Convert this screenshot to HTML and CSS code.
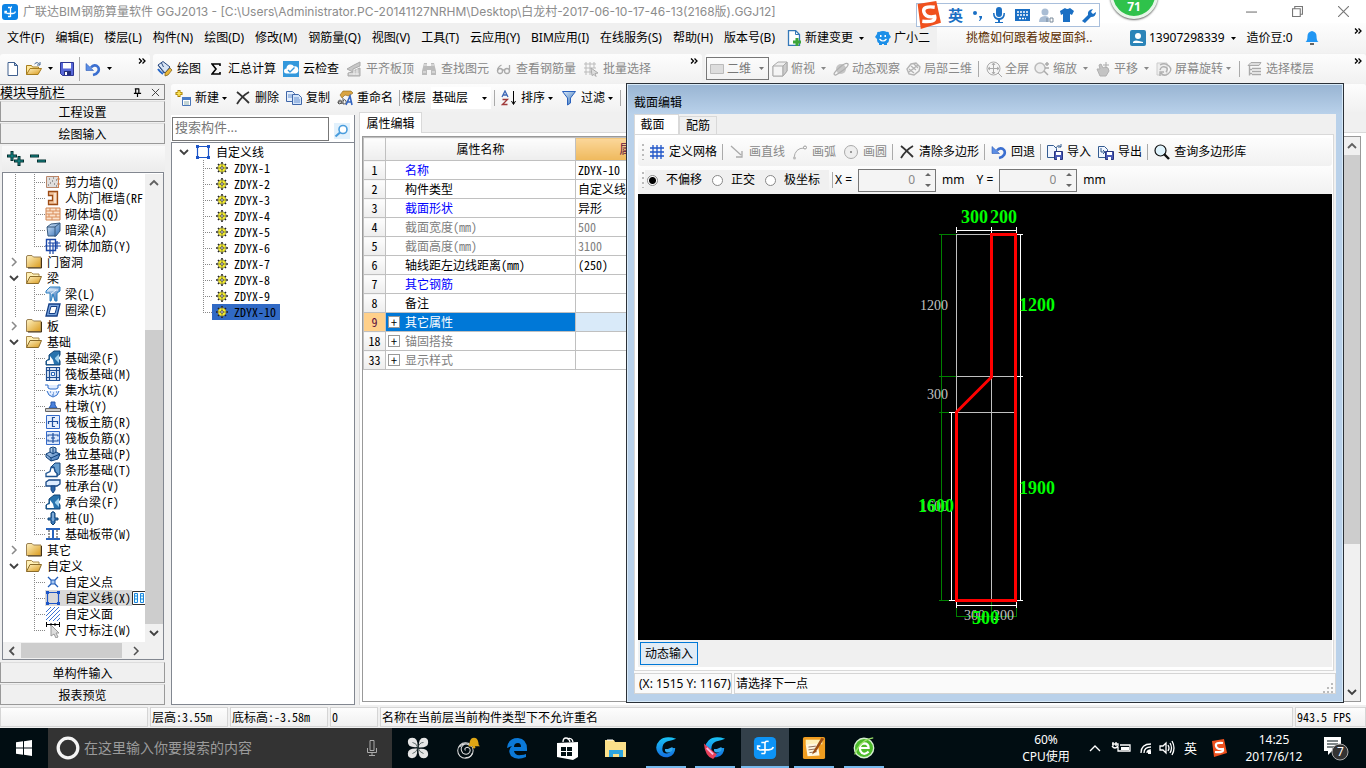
FILE: index.html
```html
<!DOCTYPE html>
<html lang="zh-CN">
<head>
<meta charset="utf-8">
<title>广联达BIM钢筋算量软件 GGJ2013</title>
<link rel="stylesheet" href="styles.css">
</head>
<body>
<svg class="defs" aria-hidden="true">
  <defs>
    <linearGradient id="gold" x1="0" y1="0" x2="1" y2="1"><stop offset="0" stop-color="#fff3c4"/><stop offset="1" stop-color="#d99a1c"/></linearGradient>
    <linearGradient id="steel" x1="0" y1="0" x2="1" y2="1"><stop offset="0" stop-color="#dcebfa"/><stop offset="1" stop-color="#2f6cb5"/></linearGradient>
    <linearGradient id="aqua" x1="0" y1="0" x2="0" y2="1"><stop offset="0" stop-color="#19c3f5"/><stop offset="1" stop-color="#1470e0"/></linearGradient>
  </defs>
  <symbol id="app" viewBox="0 0 16 16"><rect width="16" height="16" rx="3" fill="#0d84e6"/><path d="M8.500 13V4.500q0-1.500 1.500-1.500M6 3.500h2M3 7.500q1 2 3 2h5q2 0 2.500-2M3 9.500v-2h2M6 12.500h2.500" fill="none" stroke="#fff" stroke-width="1.300"/></symbol>
  <symbol id="arr" viewBox="0 0 5 3"><path d="M0 0h5L2.500 3z" fill="currentColor"/></symbol>
  <symbol id="more" viewBox="0 0 8 6"><path d="M1 .5 3.500 3 1 5.500M4.500.5 7 3 4.500 5.500" fill="none" stroke="#000" stroke-width="1.300"/></symbol>
  <symbol id="new" viewBox="0 0 16 16"><path d="M3 1.500h6.500l3 3v10H3z" fill="#fff" stroke="#40608f"/><path d="M9.500 1.500v3h3z" fill="#b8cdea" stroke="#40608f"/></symbol>
  <symbol id="open" viewBox="0 0 16 16"><path d="M.5 13.500V4.500h5l1 1.500h6v2" fill="#ffe79b" stroke="#a67c1d"/><path d="M.5 13.500 4 7.500h11.500l-3.500 6z" fill="url(#gold)" stroke="#a67c1d"/><path d="M8.500 3q3-3 5 .5M14 1v3h-3" fill="none" stroke="#456690"/></symbol>
  <symbol id="save" viewBox="0 0 16 16"><path d="M1.500 1.500h13v13h-11l-2-2z" fill="#5868d8" stroke="#2c3593"/><path d="M4 2h8v5.500H4z" fill="#fff"/><path d="M5 10h7v4H5z" fill="#24307c"/><path d="M6 11h2v3H6z" fill="#fff"/></symbol>
  <symbol id="undo" viewBox="0 0 16 16"><path d="M8 14c5-1 7-5 5-8-2-2.500-5-2-7 .5" fill="none" stroke="#3b6fd0" stroke-width="2.600"/><path d="M1 2.500v7h7.500z" fill="#5b8ee6" stroke="#2d5ab5" stroke-width=".6"/></symbol>
  <symbol id="paint" viewBox="0 0 16 16"><path d="m1 4 5-3.500L13 6l-5 6z" fill="#d8e4f4" stroke="#2a4a80"/><path d="M1 4 7 12M4.500 2l2 4" stroke="#2a4a80"/><path d="m8 12 5-5 2 2-4 5-3 1z" fill="#e8b63a" stroke="#7a5a12" stroke-width=".7"/><path d="M1 8q2 3 5 5" stroke="#2667c9" stroke-width="2" fill="none"/></symbol>
  <symbol id="cloud" viewBox="0 0 16 16"><rect width="16" height="16" fill="#3398dc"/><path d="M3.500 12.500a2.500 2.500 0 0 1 0-5 4 4 0 0 1 7.500-2 3.500 3.500 0 0 1 1.500 7z" fill="#fff"/><path d="m5 9 2 2 4.500-4.500" fill="none" stroke="#3398dc" stroke-width="1.400"/></symbol>
  <symbol id="slab" viewBox="0 0 16 16"><path d="m1 8 7-4 6-3v4L7 8v2l7-3v8H2v-3l5-1z" fill="#c8c8c8" stroke="#aaa"/><path d="M8 9v5M11 8v6M3 13h10" stroke="#eee"/></symbol>
  <symbol id="bino" viewBox="0 0 16 16"><path d="M3 2h3v3h4V2h3l2 8v4h-5V9H6v5H1v-4z" fill="#bbb"/><path d="M3 4h3M10 4h3M2 11h3M11 11h3" stroke="#eee"/></symbol>
  <symbol id="glasses" viewBox="0 0 16 16"><g fill="none" stroke="#aaa" stroke-width="1.300"><circle cx="4" cy="10" r="2.500"/><circle cx="11" cy="10" r="2.500"/><path d="M6 9h3M1.500 10q0-4 4-6M13.500 11V4"/></g></symbol>
  <symbol id="batch" viewBox="0 0 16 16"><path d="M1 3h12M1 7h12M1 11h7M3 1v13M7 1v13M11 1v6" fill="none" stroke="#bbb"/><path d="m8 7 7 5-3 .5 1 3-2-2-2 1z" fill="#ddd" stroke="#aaa"/></symbol>
  <symbol id="cube" viewBox="0 0 16 16"><path d="m1 5 5-4h9v9l-4 5H1z" fill="#eee" stroke="#aaa"/><path d="M1 5h10v10H1z" fill="#f4f4f4" stroke="#aaa"/><path d="m11 5 4-4v9l-4 5z" fill="#ccc" stroke="#aaa"/></symbol>
  <symbol id="orbit" viewBox="0 0 16 16"><circle cx="8" cy="8" r="5" fill="#c6c6c6"/><path d="M2 14Q-1 13 6 7t9-4q1 2-6 7t-7 4z" fill="none" stroke="#b0b0b0" stroke-width="1.300"/></symbol>
  <symbol id="part" viewBox="0 0 16 16"><g fill="none" stroke="#b4b4b4" stroke-width="1.400"><path d="m2 8 4-5 5-1 4 4-1 4-5 4-5-1zM4 8l5 4M6 5l5 4M9 3l4 4M4 11 13 4"/></g></symbol>
  <symbol id="full" viewBox="0 0 16 16"><circle cx="7.500" cy="7.500" r="6.500" fill="#f5f5f5" stroke="#aaa"/><path d="M7.500 2v11M2 7.500h11M6 4l1.500-2L9 4M6 11l1.500 2L9 11M4 6 2 7.500 4 9M11 6l2 1.500L11 9M12 12l4 4" fill="none" stroke="#aaa"/></symbol>
  <symbol id="zoom" viewBox="0 0 16 16"><circle cx="6" cy="7" r="5" fill="#eee" stroke="#bbb" stroke-width="1.500"/><path d="m10 10 4 4M11 3h4M13 1v4M11 7h4" stroke="#aaa" stroke-width="1.500"/></symbol>
  <symbol id="hand" viewBox="0 0 16 16"><path d="M2 8h3l-1-4 2-1 2 4 2-1 3 1 1 3-3 5H5z" fill="#c4c4c4" stroke="#b0b0b0"/><path d="M11 1v6M8 4h6" stroke="#aaa"/></symbol>
  <symbol id="rot" viewBox="0 0 16 16"><path d="M1 2h10v12H1z" fill="#eee" stroke="#ccc"/><path d="M4 4q5-3 9 1t-1 8q-4 3-7-1M4 9q1-4 5-3t1 5M4 15v-4h4" fill="none" stroke="#b0b0b0" stroke-width="1.400"/></symbol>
  <symbol id="floors" viewBox="0 0 16 16"><path d="M4 1.500h10l-2 3H1z" fill="#ddd" stroke="#aaa"/><path d="M5 7.500h9M5 10.500h9M5 13.500h9M2.500 5v9.500M3 8.500h2M3 12.500h2" fill="none" stroke="#aaa" stroke-width="1.400"/></symbol>
  <symbol id="newc" viewBox="0 0 16 16"><path d="M4 0v7M0.500 3.500h7" stroke="#a98000" stroke-width="3"/><path d="M4 1v5M1.500 3.500h5" stroke="#ffe75c" stroke-width="1.500"/><path d="M7.500 7.500h8v8h-8z" fill="#fff" stroke="#4a76b8"/><path d="M7 7h9v3H7z" fill="#4a7cc8"/><path d="M9 12h5M9 14h5" stroke="#8aa" /></symbol>
  <symbol id="x" viewBox="0 0 16 16"><path d="M2 2q5 4 12 11M14 2Q7 6 2 14" fill="none" stroke="#333" stroke-width="1.800"/></symbol>
  <symbol id="copy" viewBox="0 0 16 16"><path d="M.5 1.500h6l2 2v8h-8z" fill="#e5effc" stroke="#3f66a8"/><path d="M6.500 4.500h6l3 3v7h-9z" fill="#d3e4fa" stroke="#3f66a8"/><path d="M2 5h4M2 7h4M8 8h5M8 10h6M8 12h6" stroke="#6b92cf"/></symbol>
  <symbol id="ren" viewBox="0 0 16 16"><path d="m3 5 3-4h8l2 2-4 3-4-1-3 3z" fill="#d9a441" stroke="#8b6517" stroke-width=".6"/><path d="M1 13q0-3 2-3t2 3v1M5 12q-4-1-4 1t4 0M6 8v6q4 0 3-3t-3 0" fill="none" stroke="#555"/><path d="m9 15 4-9 2 9M10 12h5" fill="none" stroke="#3465c0" stroke-width="1.600"/></symbol>
  <symbol id="sort" viewBox="0 0 16 16"><path d="m1 7 3-6 3 6M2 5h4" fill="none" stroke="#3c66b4" stroke-width="1.300"/><path d="M1.500 9.500h5l-5 5h5" fill="none" stroke="#a03a3a" stroke-width="1.300"/><path d="M12.500 1v13M10.500 11l2 3.500 2-3.500" fill="none" stroke="#000"/></symbol>
  <symbol id="funnel" viewBox="0 0 16 16"><path d="M1.500 1.500h13l-5 6.500v5l-3 2V8z" fill="url(#steel)" stroke="#2b62bd"/></symbol>
  <symbol id="lens" viewBox="0 0 16 16"><path d="M0 0h16v16H0z" fill="#e2f1fc"/><circle cx="9" cy="6.500" r="4" fill="#fff" stroke="#4a9ddd" stroke-width="1.600"/><path d="m6 9.500-4.500 4" stroke="#4a9ddd" stroke-width="2.200"/></symbol>
  <symbol id="fold" viewBox="0 0 16 14"><path d="M.5 12.500V2q0-1.500 1.500-1.500h4L7.500 2H15v10.500z" fill="url(#gold)" stroke="#9a8052"/><path d="M15.500 3v10H2" fill="none" stroke="#443214"/></symbol>
  <symbol id="foldo" viewBox="0 0 16 14"><path d="M.5 12.500V1.500h5L7 3h6v3" fill="#fff0b5" stroke="#a98a4d"/><path d="M.5 12.500 4 5.500h11.500l-3 7z" fill="url(#gold)" stroke="#8a6b2a"/></symbol>
  <symbol id="down" viewBox="0 0 10 10"><path d="m1 3 4 4 4-4" fill="none" stroke="#404040" stroke-width="1.800"/></symbol>
  <symbol id="up" viewBox="0 0 10 10"><path d="m1 7 4-4 4 4" fill="none" stroke="#606060" stroke-width="1.800"/></symbol>
  <symbol id="right" viewBox="0 0 10 10"><path d="m3 1 4 4-4 4" fill="none" stroke="currentColor" stroke-width="1.500"/></symbol>
  <symbol id="left" viewBox="0 0 10 10"><path d="M7 1 3 5l4 4" fill="none" stroke="#505050" stroke-width="1.800"/></symbol>
  <symbol id="sq" viewBox="0 0 16 16"><path d="M2.500 2.500h11v11h-11z" fill="none" stroke="#1c55c8" stroke-width="1.200"/><path d="M1 1h3v3H1zM12 1h3v3h-3zM1 12h3v3H1zM12 12h3v3h-3z" fill="#1c55c8"/></symbol>
  <symbol id="gear" viewBox="0 0 12 12"><path d="M6 0v12M0 6h12M2 2l8 8M10 2l-8 8" stroke="#222" stroke-width="1.600"/><circle cx="6" cy="6" r="4.200" fill="#f6ee28" stroke="#555" stroke-width=".6"/><path d="M6 2v8M2 6h8" stroke="#555" stroke-width=".6"/><circle cx="6" cy="6" r="1.300" fill="#fff" stroke="#333" stroke-width=".8"/></symbol>
  <symbol id="w1" viewBox="0 0 16 16"><path d="M1.500 2.500h12v11h-12z" fill="#e0dedd" stroke="#b8866a"/><path d="M4 5h1M8 4h1M11 6h1M5 9h1M9 10h1M7 7h1M3 11h1M11 12h1" stroke="#555"/><path d="M13.500 2v12M12 5h3M12 10h3" stroke="#d08050"/></symbol>
  <symbol id="w2" viewBox="0 0 16 16"><path d="M3.500 1.500h9v13h-9v-4h4v-5h-4z" fill="#f1c39b" stroke="#9c4a14" stroke-width="1.300"/><path d="M10 3v10" stroke="#fff"/></symbol>
  <symbol id="w3" viewBox="0 0 16 16"><path d="M1 2h14v12H1z" fill="#fbe3cd" stroke="#cf8350"/><path d="M1 5h14M1 8h14M1 11h14M5 2v3M11 2v3M8 5v3M4 8v3M11 8v3M7 11v3" stroke="#d98c58"/></symbol>
  <symbol id="w4" viewBox="0 0 16 16"><path d="m2 5 4-3 9-1v8l-4 5H3z" fill="url(#steel)" stroke="#37597f"/><path d="M2 5h8v10M10 5l5-4" fill="none" stroke="#37597f"/></symbol>
  <symbol id="w5" viewBox="0 0 16 16"><path d="M1.500 1.500h9v11h-9z" fill="#fff" stroke="#1b47a8" stroke-width="1.400"/><path d="M0 8h16M3 5h12M5 2v14M8 5v11M12 3v8" fill="none" stroke="#1b47a8" stroke-width="1.200"/></symbol>
  <symbol id="b1" viewBox="0 0 16 16"><path d="m1 5 4-4h10v4l-3 2v8h-2l-2-7-2 7H5V7H1z" fill="url(#steel)" stroke="#2a7fc0"/><path d="M3 4h10M6 8l5-4" stroke="#e9f6ff"/></symbol>
  <symbol id="b2" viewBox="0 0 16 16"><path d="M4 2h11l-3 12H1z" fill="#7aa5dd" stroke="#143f86" stroke-width="1.300"/><path d="M6 4.500h6l-2 7H4z" fill="#fff" stroke="#143f86"/></symbol>
  <symbol id="f1" viewBox="0 0 16 16"><path d="M1 15v-4l3-2V5l5-4h6v4l-2 3 2 3v4z" fill="#2873ad" stroke="#0f4375"/><path d="M2 14v-3l3-1V6l3 4 1 4z" fill="#fff"/><path d="m5 6 5-4M10 8l4-4v9l-4-4z" fill="#9cd0ee"/></symbol>
  <symbol id="f2" viewBox="0 0 16 16"><path d="M1.500 1.500h13v13h-13zM1 4.500h14M1 11.500h14M4.500 1v14M11.500 1v14" fill="#dfeaf8" stroke="#1f4f94" stroke-width="1.200"/><path d="M6.500 6.500h3v3h-3z" fill="#fff" stroke="#2765b6"/></symbol>
  <symbol id="f3" viewBox="0 0 16 16"><path d="M0 3h3v3l2 1h6l2-1V3h3M2 9q1 5 6 6 5-1 6-6" fill="#e1edff" stroke="#2f6dc9"/><path d="M5 10h1M8 11h1M11 10h1M7 13h2" stroke="#2f6dc9"/></symbol>
  <symbol id="f4" viewBox="0 0 16 16"><path d="m4 10 2-3V4h4v3l2 3z" fill="#4a82dd" stroke="#2859aa"/><path d="M.5 10.500h15v3H.5z" fill="#ccc" stroke="#666"/></symbol>
  <symbol id="f5" viewBox="0 0 16 16"><path d="M1.500 1.500h13v13h-13z" fill="#e5effe" stroke="#356ac9"/><path d="M10 3.500H7.500v9H10M3.500 10V7.500h9V10" fill="none" stroke="#1e4f9e" stroke-width="1.200"/></symbol>
  <symbol id="f6" viewBox="0 0 16 16"><path d="M1.500 1.500h13v13h-13z" fill="#dce9fc" stroke="#356ac9"/><path d="M8 3v10M3 6.500V5h10v1.500M3 9.500V11h10V9.500M6 8h4" fill="none" stroke="#1e4f9e" stroke-width="1.200"/></symbol>
  <symbol id="f7" viewBox="0 0 16 16"><path d="m1 8 4-2V2l3-1 3 1v4l4 2-2 5-7 2-5-4z" fill="url(#steel)" stroke="#0d3e78"/><path d="m1 8 5 4 9-4M6 12v3M5 6l3 2V2M8 8l3-2" fill="none" stroke="#0d3e78"/></symbol>
  <symbol id="f8" viewBox="0 0 16 16"><path d="m6 5 4-4h5v11l-3 2v-3l-2-2-1-4z" fill="#679fd0" stroke="#164579"/><path d="M1 14.500v-3l4-2 1-4h3l1 4 2 2v3z" fill="#fff" stroke="#1e538f" stroke-width="1.300"/></symbol>
  <symbol id="f9" viewBox="0 0 16 16"><path d="m1 4 3-2h11v4l-3 2H1z" fill="#dcecff" stroke="#184886" stroke-width="1.300"/><path d="M6 8h4v4l-2 3-2-3z" fill="#2a65a9" stroke="#184886"/></symbol>
  <symbol id="f10" viewBox="0 0 16 16"><path d="M6 3q2-3 4 0v5h3v2h-3v3l-2 2-2-2v-3H3V8h3z" fill="#3b77b6" stroke="#0f4375"/><path d="M8 3v8" stroke="#c3ddf4"/></symbol>
  <symbol id="f11" viewBox="0 0 16 16"><path d="M1 3h14M1 13h14M8 3v10" stroke="#2863bd" stroke-width="2"/><path d="M4 4v8M12 4v8" stroke="#333" stroke-dasharray="2 1"/></symbol>
  <symbol id="c1" viewBox="0 0 16 16"><path d="m3 3 3 3M13 3l-3 3M3 13l3-3M13 13l-3-3" stroke="#1e5bb8" stroke-width="1.300"/><path d="M6 6h4v4H6z" fill="#a8c8f2" stroke="#1e5bb8"/></symbol>
  <symbol id="c3" viewBox="0 0 16 16"><path d="m1 6 5-5M1 10l9-9M1 14 14 1M4 15 15 4M8 15l7-7M12 15l3-3" stroke="#3c74d4"/></symbol>
  <symbol id="c4" viewBox="0 0 16 16"><path d="M1.500 0v5M14.500 0v5M1 2.500h14M6 1v3M10 1v3" stroke="#000"/><path d="M6 3v11l3-2 2 4 2-1-2-4h3z" fill="#ddd" stroke="#999"/></symbol>
  <symbol id="grid" viewBox="0 0 16 16"><path d="M1 4h14M1 8h14M1 12h14M4 1v14M8 1v14M12 1v14" stroke="#1f55c8" stroke-width="1.300"/></symbol>
  <symbol id="dl" viewBox="0 0 16 16"><path d="m2 2 10 9M13 7v6H7" fill="none" stroke="#aaa" stroke-width="1.300"/></symbol>
  <symbol id="arc" viewBox="0 0 16 16"><path d="M2 14Q3 4 12 4" fill="none" stroke="#aaa"/><circle cx="13" cy="3.500" r="1.500" fill="#fff" stroke="#999"/><circle cx="2.500" cy="14" r="1.500" fill="#bbb"/></symbol>
  <symbol id="circ" viewBox="0 0 16 16"><circle cx="8" cy="8" r="6.500" fill="#eee" stroke="#aaa"/><path d="M7 8h2" stroke="#999" stroke-width="2"/></symbol>
  <symbol id="imp" viewBox="0 0 16 16"><path d="M.5 1.500h6l3 3v9h-9z" fill="#f1f6ff" stroke="#345c91"/><path d="M7.500 7.500h8v8h-8z" fill="#4858b5" stroke="#283580"/><path d="M9 8h5v3H9zM10 13h3v3h-3z" fill="#fff"/><path d="M9 4q2-4 5-1M14 0v3h-3" fill="none" stroke="#345c91"/></symbol>
  <symbol id="exp" viewBox="0 0 16 16"><path d="M.5 2.500h6l3 3v8h-9z" fill="#f1f6ff" stroke="#345c91"/><path d="M7.500 7.500h8v8h-8z" fill="#4858b5" stroke="#283580"/><path d="M9 8h5v3H9zM10 13h3v3h-3z" fill="#fff"/><path d="M3 4v4h4M5 6l2 2-2 2" fill="none" stroke="#345c91"/></symbol>
  <symbol id="query" viewBox="0 0 16 16"><circle cx="6.500" cy="6.500" r="5.500" fill="#dff3fc" stroke="#111" stroke-width="1.200"/><path d="m10 10 5 5" stroke="#111" stroke-width="2.400"/></symbol>
  <symbol id="dragon" viewBox="0 0 26 26"><path d="M24 3Q12-1 6 5 0 11 4 18q4 6 11 5 8-2 8-10l-5 0q1 5-4 6-5 0-5-5 0-6 5-8 6-1 10-3z" fill="url(#aqua)"/><path d="M12 14q-1 4 4 4 5-1 4-6l-5 2" fill="#35a9ee"/></symbol>
  <symbol id="sogou" viewBox="0 0 16 18"><path d="m1 2 12-2 3 14-13 4z" fill="#f0511e"/><path d="M12 4Q4 3 5 7t7 3q1 4-8 3" fill="none" stroke="#fff" stroke-width="2.200"/></symbol>
</svg>

<header class="titlebar">
  <svg class="i16"><use href="#app"/></svg>
  <h1>广联达BIM钢筋算量软件 GGJ2013 - [C:\Users\Administrator.PC-20141127NRHM\Desktop\白龙村-2017-06-10-17-46-13(2168版).GGJ12]</h1>
  <div class="winbtns">
    <button aria-label="最小化"><svg viewBox="0 0 10 10"><path d="M0 5.500h10" stroke="#777"/></svg></button>
    <button aria-label="还原"><svg viewBox="0 0 10 10"><path d="M.5 2.500h7v7h-7zM2.500 2.500v-2h7v7h-2" fill="none" stroke="#777"/></svg></button>
    <button aria-label="关闭"><svg viewBox="0 0 10 10"><path d="m0 0 10 10M10 0 0 10" stroke="#777"/></svg></button>
  </div>
</header>

<nav class="menubar">
  <div class="menus">
    <button>文件(F)</button><button>编辑(E)</button><button>楼层(L)</button><button>构件(N)</button><button>绘图(D)</button><button>修改(M)</button><button>钢筋量(Q)</button><button>视图(V)</button><button>工具(T)</button><button>云应用(Y)</button><button>BIM应用(I)</button><button>在线服务(S)</button><button>帮助(H)</button><button>版本号(B)</button>
    <button class="ic"><svg class="i16" viewBox="0 0 16 16"><path d="M2.500.5h7l4 4v11h-11z" fill="#fff" stroke="#3478b8" stroke-width="1.300"/><path d="M9.500.5v4h4" fill="none" stroke="#3478b8"/><path d="M11 8v8M7 12h8" stroke="#3da53a" stroke-width="3"/></svg>新建变更<svg class="arr"><use href="#arr"/></svg></button>
    <button class="ic"><svg class="i16" viewBox="0 0 16 16"><path d="M2 4q0-3 2-2 4-2 8 0 2-1 2 2l2 3-2 2q0 4-2 4v2H9v-1H7v1H4v-2q-2 0-2-4L0 7z" fill="#1c8fe8"/><path d="M5 6h1.500M9.500 6H11" stroke="#fff" stroke-width="2"/><path d="M4.500 9q3.500 4 7 0" fill="none" stroke="#fff" stroke-width="1.200"/></svg>广小二</button>
  </div>
  <a class="tip" href="#">挑檐如何跟着坡屋面斜..</a>
  <div class="account">
    <button class="ic"><svg class="i16" viewBox="0 0 16 16"><rect width="16" height="16" rx="2" fill="#2b84b8"/><circle cx="8" cy="6" r="3" fill="#fff"/><path d="M3 12q1-3 10 0v1H3z" fill="#fff"/></svg>13907298339<svg class="arr"><use href="#arr"/></svg></button>
    <button>造价豆:0</button>
    <button aria-label="通知"><svg class="i16" viewBox="0 0 16 16"><path d="M1.500 12q2-1 2-6 0-4 4.500-5 4.500 1 4.500 5 0 5 2 6z" fill="#2196f3"/><path d="M6 14h4" stroke="#333" stroke-width="1.500"/></svg></button>
    <button class="last" aria-label="更多"><svg class="more"><use href="#more"/></svg></button>
  </div>
</nav>

<div class="toolbars">
  <div class="bar t1">
    <button aria-label="新建"><svg class="i16"><use href="#new"/></svg></button>
    <button aria-label="打开"><svg class="i16"><use href="#open"/></svg><svg class="arr"><use href="#arr"/></svg></button>
    <button aria-label="保存"><svg class="i16"><use href="#save"/></svg></button>
    <i class="sep"></i>
    <button aria-label="撤销"><svg class="i16"><use href="#undo"/></svg><svg class="arr"><use href="#arr"/></svg></button>
    <button class="last" aria-label="更多"><svg class="more"><use href="#more"/></svg></button>
  </div>
  <div class="bar t2">
    <button><svg class="i16"><use href="#paint"/></svg>绘图</button>
    <button><svg class="sigma" viewBox="0 0 10 12"><path d="M9 3V1H1l4 5-4 5h8V9" fill="none" stroke="#000" stroke-width="1.600"/></svg>汇总计算</button>
    <button><svg class="i16"><use href="#cloud"/></svg>云检查</button>
    <button disabled><svg class="i16"><use href="#slab"/></svg>平齐板顶</button>
    <button disabled><svg class="i16"><use href="#bino"/></svg>查找图元</button>
    <button disabled><svg class="i16"><use href="#glasses"/></svg>查看钢筋量</button>
    <button disabled><svg class="i16"><use href="#batch"/></svg>批量选择</button>
    <button class="last" aria-label="更多"><svg class="more"><use href="#more"/></svg></button>
  </div>
  <div class="bar t3">
    <label class="dim"><svg viewBox="0 0 14 10"><path d="M.5.500h13v9H.5z" fill="#ddd" stroke="#bbb"/></svg><select aria-label="视图维度" disabled><option>二维</option></select><svg class="arr"><use href="#arr"/></svg></label>
    <button disabled><svg class="i16"><use href="#cube"/></svg>俯视<svg class="arr"><use href="#arr"/></svg></button>
    <button disabled><svg class="i16"><use href="#orbit"/></svg>动态观察</button>
    <button disabled><svg class="i16"><use href="#part"/></svg>局部三维</button>
    <i class="sep"></i>
    <button disabled><svg class="i16"><use href="#full"/></svg>全屏</button>
    <button disabled><svg class="i16"><use href="#zoom"/></svg>缩放<svg class="arr"><use href="#arr"/></svg></button>
    <button disabled><svg class="i16"><use href="#hand"/></svg>平移<svg class="arr"><use href="#arr"/></svg></button>
    <button disabled class="tight"><svg class="i16"><use href="#rot"/></svg>屏幕旋转<svg class="arr"><use href="#arr"/></svg></button>
    <i class="sep"></i>
    <button disabled><svg class="i16"><use href="#floors"/></svg>选择楼层</button>
    <button class="last" aria-label="更多"><svg class="more"><use href="#more"/></svg></button>
  </div>
</div>

<main class="work">
  <aside class="dock song">
    <h2>模块导航栏<svg class="pin" viewBox="0 0 10 10"><path d="M2 1h5M3 1v5M6.500 1v5M1 6h8M5 6v4" fill="none" stroke="#000" stroke-width="1.300"/></svg><svg class="pin" viewBox="0 0 10 10"><path d="m1 1 8 8M9 1 1 9" stroke="#333"/></svg></h2>
    <button class="section">工程设置</button>
    <button class="section">绘图输入</button>
    <div class="strip"><svg viewBox="0 0 44 16"><g fill="none" stroke="#052f2f" stroke-width="3"><path d="M5 0v10M0 5h10M12 5v10M7 10h10M23 5h9M30 10h9"/></g><path d="M5 1v8M1 5h8M12 6v8M8 10h8M24 5h7M31 10h7" stroke="#159595"/></svg></div>
    <div class="treebox">
      <div class="treerow">
        <ul class="tree">
          <li class="kid"><i class="g1"></i><i class="g2"></i><svg class="i16"><use href="#w1"/></svg>剪力墙(Q)</li>
          <li class="kid"><i class="g1"></i><i class="g2"></i><svg class="i16"><use href="#w2"/></svg>人防门框墙(RF</li>
          <li class="kid"><i class="g1"></i><i class="g2"></i><svg class="i16"><use href="#w3"/></svg>砌体墙(Q)</li>
          <li class="kid"><i class="g1"></i><i class="g2"></i><svg class="i16"><use href="#w4"/></svg>暗梁(A)</li>
          <li class="kid"><i class="g1"></i><i class="g2 end"></i><svg class="i16"><use href="#w5"/></svg>砌体加筋(Y)</li>
          <li class="dir"><svg class="ex"><use href="#right"/></svg><svg class="fold"><use href="#fold"/></svg>门窗洞</li>
          <li class="dir"><svg class="ex"><use href="#down"/></svg><svg class="fold"><use href="#foldo"/></svg>梁</li>
          <li class="kid"><i class="g1"></i><i class="g2"></i><svg class="i16"><use href="#b1"/></svg>梁(L)</li>
          <li class="kid"><i class="g1"></i><i class="g2 end"></i><svg class="i16"><use href="#b2"/></svg>圈梁(E)</li>
          <li class="dir"><svg class="ex"><use href="#right"/></svg><svg class="fold"><use href="#fold"/></svg>板</li>
          <li class="dir"><svg class="ex"><use href="#down"/></svg><svg class="fold"><use href="#foldo"/></svg>基础</li>
          <li class="kid"><i class="g1"></i><i class="g2"></i><svg class="i16"><use href="#f1"/></svg>基础梁(F)</li>
          <li class="kid"><i class="g1"></i><i class="g2"></i><svg class="i16"><use href="#f2"/></svg>筏板基础(M)</li>
          <li class="kid"><i class="g1"></i><i class="g2"></i><svg class="i16"><use href="#f3"/></svg>集水坑(K)</li>
          <li class="kid"><i class="g1"></i><i class="g2"></i><svg class="i16"><use href="#f4"/></svg>柱墩(Y)</li>
          <li class="kid"><i class="g1"></i><i class="g2"></i><svg class="i16"><use href="#f5"/></svg>筏板主筋(R)</li>
          <li class="kid"><i class="g1"></i><i class="g2"></i><svg class="i16"><use href="#f6"/></svg>筏板负筋(X)</li>
          <li class="kid"><i class="g1"></i><i class="g2"></i><svg class="i16"><use href="#f7"/></svg>独立基础(P)</li>
          <li class="kid"><i class="g1"></i><i class="g2"></i><svg class="i16"><use href="#f8"/></svg>条形基础(T)</li>
          <li class="kid"><i class="g1"></i><i class="g2"></i><svg class="i16"><use href="#f9"/></svg>桩承台(V)</li>
          <li class="kid"><i class="g1"></i><i class="g2"></i><svg class="i16"><use href="#f1"/></svg>承台梁(F)</li>
          <li class="kid"><i class="g1"></i><i class="g2"></i><svg class="i16"><use href="#f10"/></svg>桩(U)</li>
          <li class="kid"><i class="g1"></i><i class="g2 end"></i><svg class="i16"><use href="#f11"/></svg>基础板带(W)</li>
          <li class="dir"><svg class="ex"><use href="#right"/></svg><svg class="fold"><use href="#fold"/></svg>其它</li>
          <li class="dir"><svg class="ex"><use href="#down"/></svg><svg class="fold"><use href="#foldo"/></svg>自定义</li>
          <li class="kid"><i class="g1 off"></i><i class="g2"></i><svg class="i16"><use href="#c1"/></svg>自定义点</li>
          <li class="kid"><i class="g1 off"></i><i class="g2"></i><span class="cur"><svg class="i16"><use href="#sq"/></svg>自定义线(X)</span><svg class="book" viewBox="0 0 13 14"><path d="M.5.500h14v13H.5z" fill="#fff" stroke="#333"/><path d="M2.500 2.500h3v9h-3zM8.500 2.500h3v9h-3zM3 5h2M3 8h2M9 5h2M9 8h2" fill="#dff" stroke="#1c86e0"/></svg></li>
          <li class="kid"><i class="g1 off"></i><i class="g2"></i><svg class="i16"><use href="#c3"/></svg>自定义面</li>
          <li class="kid"><i class="g1 off"></i><i class="g2 end"></i><svg class="i16"><use href="#c4"/></svg>尺寸标注(W)</li>
        </ul>
        <div class="vbar"><svg><use href="#up"/></svg><i class="space"></i><i class="thumb"></i><svg><use href="#down"/></svg></div>
      </div>
      <div class="hbar"><svg><use href="#left"/></svg><i></i><svg><use href="#right"/></svg></div>
    </div>
    <button class="section">单构件输入</button>
    <button class="section">报表预览</button>
  </aside>

  <section class="center">
    <div class="bar t4">
      <button><svg class="i16"><use href="#newc"/></svg>新建<svg class="arr"><use href="#arr"/></svg></button>
      <button><svg class="i16"><use href="#x"/></svg>删除</button>
      <button><svg class="i16"><use href="#copy"/></svg>复制</button>
      <button><svg class="i16"><use href="#ren"/></svg>重命名</button>
      <i class="sep"></i>
      <label class="floor" for="floor">楼层</label>
      <span class="combo"><select id="floor"><option>基础层</option></select><svg class="arr"><use href="#arr"/></svg></span>
      <i class="sep"></i>
      <button><svg class="i16"><use href="#sort"/></svg>排序<svg class="arr"><use href="#arr"/></svg></button>
      <button><svg class="i16"><use href="#funnel"/></svg>过滤<svg class="arr"><use href="#arr"/></svg></button>
      <i class="sep"></i>
    </div>
    <div class="panes">
      <div class="parts">
        <div class="search"><input type="text" placeholder="搜索构件..." aria-label="搜索构件"><button aria-label="搜索"><svg class="i16"><use href="#lens"/></svg></button></div>
        <ul class="list song">
          <li class="root"><svg class="ex"><use href="#down"/></svg><svg class="i16"><use href="#sq"/></svg>自定义线</li>
          <li><i class="g2"></i><span><svg class="gear"><use href="#gear"/></svg>ZDYX-1</span></li>
          <li><i class="g2"></i><span><svg class="gear"><use href="#gear"/></svg>ZDYX-2</span></li>
          <li><i class="g2"></i><span><svg class="gear"><use href="#gear"/></svg>ZDYX-3</span></li>
          <li><i class="g2"></i><span><svg class="gear"><use href="#gear"/></svg>ZDYX-4</span></li>
          <li><i class="g2"></i><span><svg class="gear"><use href="#gear"/></svg>ZDYX-5</span></li>
          <li><i class="g2"></i><span><svg class="gear"><use href="#gear"/></svg>ZDYX-6</span></li>
          <li><i class="g2"></i><span><svg class="gear"><use href="#gear"/></svg>ZDYX-7</span></li>
          <li><i class="g2"></i><span><svg class="gear"><use href="#gear"/></svg>ZDYX-8</span></li>
          <li><i class="g2"></i><span><svg class="gear"><use href="#gear"/></svg>ZDYX-9</span></li>
          <li><i class="g2 end"></i><span class="sel"><svg class="gear"><use href="#gear"/></svg>ZDYX-10</span></li>
        </ul>
      </div>
      <div class="props song">
        <div class="tabs"><button class="on">属性编辑</button></div>
        <div class="sheet">
          <div class="grid">
            <table>
              <thead><tr><th class="n"></th><th class="name">属性名称</th><th class="val">属性值</th></tr></thead>
              <tbody>
                <tr><th>1</th><td class="blue">名称</td><td>ZDYX-10</td></tr>
                <tr><th>2</th><td>构件类型</td><td>自定义线</td></tr>
                <tr><th>3</th><td class="blue">截面形状</td><td>异形</td></tr>
                <tr class="dis"><th>4</th><td>截面宽度(mm)</td><td>500</td></tr>
                <tr class="dis"><th>5</th><td>截面高度(mm)</td><td>3100</td></tr>
                <tr><th>6</th><td>轴线距左边线距离(mm)</td><td>(250)</td></tr>
                <tr><th>7</th><td class="blue">其它钢筋</td><td></td></tr>
                <tr><th>8</th><td>备注</td><td></td></tr>
                <tr class="hot"><th>9</th><td class="grp"><button>+</button>其它属性</td><td></td></tr>
                <tr class="dis"><th>18</th><td class="grp"><button>+</button>锚固搭接</td><td></td></tr>
                <tr class="dis"><th>33</th><td class="grp"><button>+</button>显示样式</td><td></td></tr>
              </tbody>
            </table>
            <div class="vbar main"><svg><use href="#up"/></svg><i class="thumb"></i><svg><use href="#down"/></svg></div>
          </div>
        </div>
      </div>
    </div>
  </section>
</main>

<footer class="status song"><span class="s1"></span><span class="s2">层高:3.55m</span><span class="s3">底标高:-3.58m</span><span class="s4">0</span><span class="s5">名称在当前层当前构件类型下不允许重名</span><span class="s6">943.5 FPS</span></footer>

<section class="dialog" role="dialog" aria-labelledby="dlg">
  <h2 id="dlg">截面编辑</h2>
  <div class="dbody">
    <div class="dtabs"><button class="on">截面</button><button>配筋</button></div>
    <div class="dpage">
      <div class="bar d1">
        <i class="grip"></i>
        <button><svg class="i16"><use href="#grid"/></svg>定义网格</button>
        <i class="sep"></i>
        <button disabled><svg class="i16"><use href="#dl"/></svg>画直线</button>
        <button disabled><svg class="i16"><use href="#arc"/></svg>画弧</button>
        <button disabled><svg class="i16"><use href="#circ"/></svg>画圆</button>
        <i class="sep"></i>
        <button><svg class="i16"><use href="#x"/></svg>清除多边形</button>
        <i class="sep"></i>
        <button><svg class="i16"><use href="#undo"/></svg>回退</button>
        <i class="sep"></i>
        <button><svg class="i16"><use href="#imp"/></svg>导入</button>
        <button><svg class="i16"><use href="#exp"/></svg>导出</button>
        <i class="sep"></i>
        <button><svg class="i16"><use href="#query"/></svg>查询多边形库</button>
      </div>
      <div class="bar d2">
        <i class="grip"></i>
        <div class="radios">
          <label><input type="radio" name="off" checked>不偏移</label>
          <label><input type="radio" name="off">正交</label>
          <label><input type="radio" name="off">极坐标</label>
        </div>
        <i class="sep"></i>
        <label class="num">X =<span><input type="text" value="0" disabled><svg viewBox="0 0 6 16"><path d="M0 4h6L3 1zM0 12h6l-3 3z" fill="#666"/></svg></span>mm</label>
        <label class="num">Y =<span><input type="text" value="0" disabled><svg viewBox="0 0 6 16"><path d="M0 4h6L3 1zM0 12h6l-3 3z" fill="#666"/></svg></span>mm</label>
      </div>
      <div class="canvas">
        <svg viewBox="638 194 694 446" role="img" aria-label="截面图形">
          <g fill="none" shape-rendering="crispEdges">
            <path d="M956.500 234v366M991.500 234v366M956 234.500h60M956 376.500h60M956 412.500h60" stroke="#c0c0c0"/>
            <path d="M941.500 234v366M939 234.500h17M939 376.500h17M939 412.500h17M939 600.500h17M956 616.500h60M956.500 600v17M991.500 600v17M1016.500 600v17" stroke="#008000"/>
            <path d="M956 230.500h61M956.500 227v6M991.500 227v6M1016.500 227v6M1020.500 234v367M1017 234.500h6M1017 376.500h6M1017 600.500h6M951.500 412v189M949 412.500h6M949 600.500h6M956 605.500h61M956.500 602v6M1016.500 602v6" stroke="#fff"/>
          </g>
          <path d="M991.500 234.500h24v366h-59V412l35-35z" fill="none" stroke="#f00" stroke-width="3"/>
          <g class="dimtext"><text x="920" y="310">1200</text><text x="927" y="399">300</text><text x="920" y="511">1600</text><text x="964" y="620">300</text><text x="993" y="620">200</text></g>
          <g class="edge"><text x="961" y="223">300</text><text x="990" y="223">200</text><text x="1019" y="311">1200</text><text x="1019" y="494">1900</text><text x="918" y="512">1600</text><text x="972" y="624">500</text></g>
        </svg>
      </div>
      <div class="dfoot"><button>动态输入</button></div>
    </div>
    <div class="dstatus"><span>(X: 1515 Y: 1167)</span><span class="msg">请选择下一点<svg viewBox="0 0 10 10"><path d="M8 0h2v2H8zM8 4h2v2H8zM8 8h2v2H8zM4 4h2v2H4zM4 8h2v2H4zM0 8h2v2H0z" fill="#bbb"/></svg></span></div>
  </div>
</section>

<div class="ime">
  <svg class="logo"><use href="#sogou"/></svg><b>英</b>
  <svg viewBox="0 0 130 18"><g fill="#1a6fc4"><circle cx="7" cy="7" r="2"/><path d="M11 10h3v2l-2 3h-1l1-2z"/><rect x="28" y="1" width="6" height="10" rx="3"/><path d="M25 7h1.500q0 5 4.500 5t4.500-5H37q0 6-5 7v2h3v1h-8v-1h3v-2q-5-1-5-7zM47 3h15v12H47z"/><path d="M92 5l5-3q2 2 5 0l4 3-2 4-2-1v8h-7V8l-2 1zM114 15l6-6q-1-5 5-6l-2 3 2 2 3-2q0 5-5 5l-6 6z"/></g><path d="M49 6h11M49 9h11M51 12.500h7" stroke="#fff" stroke-width="1.500" stroke-dasharray="2 1"/><g fill="#a9bdd4"><circle cx="77" cy="6" r="3.500"/><path d="M71 16q0-6 6-6 3 0 4 2v4z"/></g><path d="M79 12v4M82 12h3v4h-3z" fill="none" stroke="#789"/></svg>
</div>
<div class="speed">71</div>

<footer class="taskbar">
  <button class="start" aria-label="开始"><svg viewBox="0 0 16 16"><path d="M0 2.300 7 1.300v6.200H0zM8 1.200l8-1.200v7.500H8zM0 8.500h7v6.200l-7-1zM8 8.500h8V16l-8-1.200z" fill="#fff"/></svg></button>
  <label class="cortana"><svg class="ring" viewBox="0 0 22 22"><circle cx="11" cy="11" r="9" fill="none" stroke="#f4f4f4" stroke-width="3"/></svg><input type="text" placeholder="在这里输入你要搜索的内容" aria-label="搜索"><svg class="mic" viewBox="0 0 12 16"><path d="M4 .5h4v10H4zM1.500 8v4.500h9V8M6 12.500V15M3 15.500h6" fill="none" stroke="#aaa"/></svg></label>
  <div class="apps">
    <button aria-label="风扇"><svg viewBox="0 0 26 26"><g fill="#e6e6e6"><path d="M12.500 12Q2 13 2 6.500 2 2 7 2q6 0 5.500 10z"/><path d="M14 12.500Q13 2 19.500 2 24 2 24 7q0 6-10 5.500z"/><path d="M13.500 14Q24 13 24 19.500q0 4.500-5 4.500-6 0-5.500-10z"/><path d="M12 13.500Q13 24 6.500 24 2 24 2 19q0-6 10-5.500z"/></g><path d="M7 7q4 0 6 6 1-6 6-6M7 19q4-1 6-6 2 5 6 6" fill="none" stroke="#344" stroke-width=".8"/></svg></button>
    <button aria-label="提醒"><svg viewBox="0 0 28 28"><g fill="none" stroke="#ddd" stroke-width="1.200"><circle cx="11" cy="17" r="9"/><path d="M17 12q-5-5-9-1t0 9q5 3 8-1 2-5-3-6-4 1-2 4M19 20q-2 6-8 5M4 13q4-6 10-3"/></g><path d="M14 12q2-1 2-5 1-5 5-5t5 5q0 4 2 5z" fill="#dea615"/><circle cx="21" cy="13" r="1.500" fill="#dea615"/></svg></button>
    <button aria-label="Edge"><svg viewBox="0 0 24 24"><path d="M2 12Q3 2 13 2q9 1 9 11v2H9q1 5 7 4 3 0 5-1v3q-9 4-15-1-4-6 1-10-3 1-5 2zM9 11h7q0-4-3-4-4 0-4 4z" fill="#0b79d8"/></svg></button>
    <button aria-label="商店"><svg viewBox="0 0 24 24"><path d="m2 7 21-1v15l-5 3L2 21z" fill="#fff"/><path d="M8 6q0-4 3-4t4 4M12 3q5-2 6 3" fill="none" stroke="#fff" stroke-width="1.300"/><path d="M6 11h5v4H6zM12 11h5v4h-5zM6 16h5v4H6zM12 16h5v4h-5z" fill="#011014"/></svg></button>
    <button aria-label="文件夹"><svg viewBox="0 0 24 24"><path d="M1 4h9l1 2h11v15H1z" fill="#fbe08a"/><path d="M3 4h6" stroke="#fff"/><path d="M5 21v-7h14v7h-4v-3H9v3z" fill="#2da5e0"/></svg></button>
    <button class="run" aria-label="广联达"><svg><use href="#dragon"/></svg></button>
    <button class="run" aria-label="广联达服务"><svg viewBox="0 0 26 26"><use href="#dragon" width="26" height="26"/><path d="m1 8 14 12-4 5Q2 22 1 8z" fill="#e9405a"/><path d="m4 13 7 7" stroke="#fbd" stroke-width="2"/></svg></button>
    <button class="run act" aria-label="钢筋算量"><svg viewBox="0 0 26 26"><rect x="1" y="1" width="24" height="24" rx="5" fill="#0d93f5"/><path d="M13 19V8q0-3 4-2M9 7h4M5 12q1 4 5 3h7q4 0 5-3M5 15v-4h3M9 19h4" fill="none" stroke="#fff" stroke-width="1.700"/></svg></button>
    <button class="run" aria-label="便笺"><svg viewBox="0 0 26 26"><rect x="1" y="1" width="24" height="24" rx="2" fill="#f09d20"/><path d="M4 4h18v5H4z" fill="#fff1ba"/><path d="m4 9 13-1 2 13-13 1z" fill="#fff7e0"/><path d="m7 12 8-1M7 15l8-1M8 18l8-1" stroke="#865"/><path d="m12 17 9-15 3 1-9 14-4 3z" fill="#9c4d12"/></svg></button>
    <button class="run" aria-label="浏览器"><svg viewBox="0 0 26 26"><circle cx="13" cy="13" r="10.500" fill="#4dbb2b" stroke="#d5eed0" stroke-width="1.500"/><path d="M18 17q-6 5-9-1-2-7 4-8 5 0 5 5H9" fill="none" stroke="#fff" stroke-width="2.400"/><path d="M3 20Q9 4 23 2" fill="none" stroke="#9be36a" stroke-width="1.500"/></svg></button>
  </div>
  <div class="tray">
    <div class="cpu">60%<br>CPU使用</div>
    <svg class="sys" viewBox="0 0 98 20"><g fill="none" stroke="#fff" stroke-width="1.300"><path d="m1 13 5-5 5 5M31 7h10v6H29V9M27 4v4M24 4v4M23 6h6v2q-3 4-6 0M52 15q0-9 10-9M55 15q0-6 7-6M58 15q0-3 4-3M71 8h3l3-3v10l-3-3h-3zM79 7q2 3 0 6M81 5q3 5 0 10M83 3q4 7 0 14"/></g><path d="M32 9h8v3h-8zM59 13h3v3h-3z" fill="#fff"/></svg>
    <span class="ying">英</span>
    <svg class="so"><use href="#sogou"/></svg>
    <div class="clock">14:25<br>2017/6/12</div>
    <svg class="note" viewBox="0 0 28 26"><path d="M2 2h17v14h-9l-4 4v-4H2z" fill="#fff"/><path d="M5 6h11M5 9h11M5 12h11" stroke="#011014"/><circle cx="18" cy="17" r="8" fill="#333" stroke="#aaa"/><text x="15" y="21">7</text></svg>
  </div>
</footer>
</body>
</html>
```
FILE: styles.css
```css
* { box-sizing: border-box; }
body {
  margin: 0; height: 100vh; display: flex; flex-direction: column; overflow: hidden;
  background: #f0f0f0; color: #000; position: relative;
  font: 12px/16px "Noto Sans", "Noto Sans CJK SC", sans-serif;
}
button, input, select { font: inherit; color: inherit; margin: 0; padding: 0; border: 0; background: none; border-radius: 0; }
select { appearance: none; }
h1, h2, ul { margin: 0; padding: 0; font: inherit; list-style: none; }
svg { flex: none; display: block; }
.defs { width: 0; height: 0; position: absolute; }
.song { font-family: "Noto Sans CJK SC", sans-serif; font-feature-settings: "hwid"; }
.i16 { width: 16px; height: 16px; }
.arr { width: 5px; height: 3px; }
.more { width: 8px; height: 6px; }

/* Title bar */
.titlebar { height: 23px; flex: none; display: flex; align-items: center; gap: 5px; padding-left: 2px; background: #fff; color: #8c8c8c; }
.titlebar h1 { flex: 1; white-space: nowrap; font-family: Inter, "Noto Sans CJK SC", sans-serif; }
.winbtns { display: flex; }
.winbtns button { width: 46px; height: 20px; display: grid; place-items: center; }
.winbtns svg { width: 11px; height: 11px; }

/* Menus */
.menubar { height: 30px; flex: none; display: flex; white-space: nowrap; }
.menus { display: flex; align-items: center; gap: 11px; padding-left: 7px; width: 937px; }
.menubar .ic { display: flex; align-items: center; gap: 3px; }
.menubar .ic .arr { margin-left: 3px; }
.tip { flex: 1; align-self: stretch; line-height: 30px; padding-left: 29px; color: #5c2f00; text-decoration: none; background: linear-gradient(#fdfdfd, #f2f2f2); }
.account { width: 241px; display: flex; align-items: center; gap: 11px; padding: 0 4px 0 5px; background: linear-gradient(#fdfdfd, #f2f2f2); }
.account .arr { margin-left: 6px; }
.last { margin-left: auto; align-self: flex-start; padding-top: 5px; }

/* Tool bars */
.toolbars { height: 31px; flex: none; display: flex; gap: 3px; padding: 1px 0; }
.bar { display: flex; align-items: center; background: linear-gradient(#fdfdfd, #f1f1f1); white-space: nowrap; border-radius: 3px; }
.bar button { display: flex; align-items: center; gap: 4px; padding: 0 3px 0 4px; }
.bar button .arr { margin: 0 1px 0 2px; }
.bar button:disabled { color: #888; }
.bar .last { padding: 4px 4px 0 0; }
.sep { width: 1px; height: 16px; background: #aaa; margin: 0 4px; flex: none; }
.sigma { width: 10px; height: 12px; margin: 0 3px; }
.t1 { width: 150px; padding-left: 2px; }
.t1 button { padding: 0 2px 0 3px; }
.t1 .sep { height: 24px; margin: 0 2px; }
.t2 { width: 549px; }
.t3 { flex: 1; min-width: 0; }
.t3 button { gap: 3px; padding: 0 2px 0 3px; }
.t3 button .arr { margin: 0 2px 0 3px; }
.dim { display: flex; align-items: center; gap: 3px; width: 63px; height: 23px; border: 1px solid #777; padding: 0 4px 0 3px; margin: 0 0 0 1px; color: #777; }
.dim > svg:first-child { width: 14px; height: 10px; }
.dim select { flex: 1; min-width: 0; opacity: 1; }
.t3 .tight .arr { margin-left: 0; }

/* Work area */
.work { flex: 1; min-height: 0; display: flex; gap: 6px; }
.dock { width: 165px; display: flex; flex-direction: column; gap: 1px; padding-bottom: 1px; }
.dock h2 { display: flex; align-items: center; gap: 9px; height: 16px; border: 1px solid #888; border-left: 0; padding-right: 4px; font-size: 13px; }
.dock h2 .pin:first-of-type { margin-left: auto; }
.pin { width: 9px; height: 9px; }
.section { height: 21px; background: #f0f0f0; border: 1px solid #999; border-top-color: #ddd; text-align: center; }
.strip { height: 25px; margin: 1px 0 0 2px; padding: 5px; background: linear-gradient(#fafafa, #ececec); }
.strip svg { width: 44px; height: 16px; }
.treebox { flex: 1; min-height: 0; margin: 0 1px 1px 2px; border: 1px solid #828790; background: #fff; display: flex; flex-direction: column; }
.treerow { flex: 1; min-height: 0; display: flex; padding-top: 1px; }
.tree { flex: 1; overflow: hidden; white-space: nowrap; }
.tree li { height: 16px; display: flex; align-items: center; }
.kid { padding-left: 12px; }
.kid .i16 { margin-right: 4px; }
.dir { padding-left: 6px; }
.ex { width: 10px; height: 10px; margin-right: 7px; color: #888; }
.fold { width: 16px; height: 14px; margin-right: 5px; }
.g1, .g2 { flex: none; height: 16px; background: repeating-linear-gradient(#888 0 1px, transparent 1px 2px) 0 0/1px 100% no-repeat; }
.g1 { width: 19px; }
.g1.off { background: none; }
.g2 { width: 11px; background: repeating-linear-gradient(#888 0 1px, transparent 1px 2px) 0 0/1px 100% no-repeat, repeating-linear-gradient(90deg, #888 0 1px, transparent 1px 2px) 0 8px/100% 1px no-repeat; }
.g2.end { background-size: 1px 8px, 100% 1px; }
.cur { display: flex; background: #d9d9d9; padding-right: 1px; }
.book { width: 13px; height: 14px; }
.vbar { width: 17px; display: flex; flex-direction: column; align-items: center; gap: 4px; padding: 4px 0; background: #f0f0f0; }
.treerow .vbar { width: 18px; }
.vbar svg, .hbar svg { width: 10px; height: 10px; }
.vbar .thumb { flex: 302; width: 100%; background: #cdcdcd; }
.vbar .space { flex: 138; }
.hbar { height: 17px; display: flex; align-items: center; gap: 4px; padding: 0 22px 0 4px; background: #f0f0f0; color: #505050; }
.hbar i { width: 102px; height: 15px; background: #cdcdcd; margin-right: 5px; }

.center { flex: 1; min-width: 0; display: flex; flex-direction: column; }
.t4 { height: 28px; flex: none; }
.t4 button .arr { margin: 0 1px 0 -1px; }
.floor { margin: 0 5px 0 0; }
.t4 .sep { margin: 0 2px 0 3px; }
.combo { display: flex; align-items: center; width: 60px; height: 22px; background: #fff; padding: 0 4px 0 1px; }
.combo select { flex: 1; min-width: 0; }
.panes { flex: 1; min-height: 0; display: flex; gap: 4px; padding-bottom: 1px; }
.parts { width: 184px; padding-top: 3px; display: flex; flex-direction: column; }
.search { display: flex; height: 27px; background: #fff; padding: 2px 0 1px 1px; border-right: 1px solid #828790; }
.search input { width: 157px; border: 1px solid #777; padding: 0 2px 4px; font-size: 13px; }
.search input::placeholder { color: #777; opacity: 1; }
.search button { margin: 3px 0 0 5px; }
.list { flex: 1; background: #fff; border: 1px solid #828790; padding-top: 1px; }
.list li { height: 16px; display: flex; align-items: center; padding-left: 31px; }
.list .root { padding-left: 7px; height: 16px; }
.root .i16 { margin: 0 5px 0 -1px; }
.list li .g2 { width: 9px; }
.list span { display: flex; align-items: center; gap: 6px; padding: 0 4px; height: 16px; }
.list .sel { background: #316ac5; }
.gear { width: 12px; height: 12px; }
.props { flex: 1; min-width: 0; display: flex; flex-direction: column; }
.tabs { height: 21px; display: flex; border-bottom: 1px solid #d9d9d9; }
.tabs button { width: 63px; height: 21px; background: #fff; border: 1px solid #d9d9d9; border-bottom: 0; }
.sheet { flex: 1; min-height: 0; background: #fff; border-left: 1px solid #d9d9d9; padding: 3px 5px 3px 2px; }
.grid { height: 100%; border: 1px solid #999; display: flex; align-items: stretch; }
table { border-collapse: collapse; table-layout: fixed; width: 336px; align-self: flex-start; }
tr { height: 19px; }
th, td { border: 1px solid #c0c0c0; padding: 0; height: 19px; line-height: 16px; font-weight: 400; text-align: left; white-space: nowrap; }
th { text-align: center; background: linear-gradient(#fdfdfd, #ededed); }
thead th { height: 23px; }
th.n { width: 22px; }
th.name { width: 190px; }
th.val { width: 124px; background: linear-gradient(#fbd79a, #efb95c); color: #601040; }
td { padding-left: 2px; }
td:nth-child(2) { padding-left: 19px; }
td.grp:nth-child(2) { padding-left: 2px; }
.grp button { width: 12px; height: 12px; margin-right: 5px; line-height: 10px; border: 1px solid #999; background: #fff; color: #000; text-align: center; }
.blue { color: #00f; }
.dis td { color: #808080; }
.hot th { background: #ffd08a; color: #601040; }
.hot td { background: #d9eaf9; }
.hot .grp { background: #0078d7; color: #fff; }
.main { margin-left: auto; }
.main .thumb { flex: none; height: 70%; margin-bottom: auto; }

.status { height: 22px; flex: none; display: flex; gap: 2px; padding: 1px 0; }
.status span { background: linear-gradient(#fdfdfd, #f0f0f0); border: 1px solid #d5d5d5; padding-left: 1px; line-height: 18px; white-space: nowrap; }
.s1 { width: 148px; } .s2 { width: 78px; } .s3 { width: 98px; } .s4 { width: 48px; } .s5 { flex: 1; } .s6 { width: 71px; }

/* Section editor window */
.dialog { position: absolute; left: 626px; right: 22px; top: 83px; bottom: 65px; border: 1px solid #2b3138; background: linear-gradient(#98b4d2, #b9d1ea 30px); display: flex; flex-direction: column; padding: 0 7px 8px; box-shadow: inset 0 0 0 1px #d8eaf8; }
.dialog h2 { height: 30px; line-height: 18px; padding-top: 10px; }
.dbody { flex: 1; min-height: 0; display: flex; flex-direction: column; background: #f0f0f0; }
.dtabs { display: flex; align-items: flex-end; height: 20px; }
.dtabs button { width: 38px; height: 18px; border: 1px solid #d9d9d9; border-bottom: 0; }
.dtabs .on { width: 45px; height: 20px; background: #fff; padding-right: 8px; }
.dpage { flex: 1; min-height: 0; display: flex; flex-direction: column; border: 1px solid #d9d9d9; margin-right: 2px; padding: 3px 1px 3px 3px; background: #fff; }
.d1, .d2 { height: 28px; flex: none; }
.d1 .sep { margin: 0 2px; }
.grip { width: 2px; height: 16px; margin: 0 1px 0 4px; background: repeating-linear-gradient(#bbb 0 2px, transparent 2px 5px); }
.radios { display: flex; gap: 10px; background: #f0f0f0; padding: 2px 9px 2px 2px; }
.radios label { display: flex; align-items: center; gap: 8px; }
.radios input { appearance: none; width: 11px; height: 11px; border: 1px solid #888; border-radius: 50%; background: #fff; }
.radios input:checked { background: radial-gradient(#000 0 3px, #fff 4px); }
.d2 .sep { margin: 0 2px 0 3px; }
.num { display: flex; align-items: center; gap: 6px; margin-right: 12px; }
.num span { display: flex; align-items: center; width: 78px; height: 23px; border: 1px solid #777; padding-right: 4px; background: #f4f4f4; }
.num input { flex: 1; min-width: 0; text-align: right; padding-right: 10px; color: #888; }
.num svg { width: 6px; height: 16px; }
.canvas { flex: 1; min-height: 0; background: #000; }
.canvas svg { width: 100%; height: 100%; }
.dimtext { font: 14px "Liberation Serif", serif; fill: #c0c0c0; }
.edge { font: bold 18px "Liberation Serif", serif; fill: #0f0; }
.dfoot { height: 27px; flex: none; padding: 2px; background: #f0f0f0; }
.dfoot button { width: 58px; height: 23px; border: 1px solid #0078d7; background: #e1ecf6; }
.dstatus { height: 23px; flex: none; display: flex; gap: 2px; padding-top: 2px; background: #fafafa; }
.dstatus span { width: 98px; line-height: 19px; padding-left: 4px; border: 1px solid #d5d5d5; white-space: nowrap; }
.dstatus .msg { flex: 1; padding: 0 2px 0 1px; display: flex; justify-content: space-between; align-items: flex-end; }
.msg svg { width: 10px; height: 10px; }

/* Floating helpers */
.ime { position: absolute; left: 916px; top: 3px; width: 184px; height: 24px; border: 1px solid #a9bfdc; background: #fff; display: flex; align-items: center; }
.ime .logo { width: 27px; height: 28px; margin: 0 6px 0 -2px; }
.ime b { color: #1a6fc4; font-size: 15px; line-height: 20px; margin-right: 4px; }
.ime svg:last-child { flex: 1; height: 18px; min-width: 0; }
.speed { position: absolute; left: 1110px; top: -29px; width: 48px; height: 48px; border-radius: 50%; border: 3px solid #e9f5ea; background: #2fc24b; box-shadow: 0 1px 2px #666; color: #fff; font-weight: 700; text-align: center; line-height: 66px; }

/* Task bar */
.taskbar { height: 40px; flex: none; display: flex; background: #010d12; color: #fff; }
.start { width: 48px; display: grid; place-items: center; }
.start svg { width: 16px; height: 16px; }
.cortana { width: 344px; background: #333; display: flex; align-items: center; padding: 0 14px 0 8px; }
.ring { width: 24px; height: 24px; margin-right: 4px; }
.cortana input { flex: 1; min-width: 0; font-size: 14px; }
.cortana input::placeholder { color: #9b9b9b; opacity: 1; }
.mic { width: 12px; height: 16px; }
.apps { display: flex; width: 496px; justify-content: space-between; padding-left: 2px; }
.apps button { width: 48px; display: flex; align-items: center; justify-content: center; }
.apps svg { width: 24px; height: 24px; }
.run { background: linear-gradient(#76b9ed, #76b9ed) center bottom/40px 2px no-repeat; }
.run.act { background: linear-gradient(#76b9ed, #76b9ed) center bottom/100% 2px no-repeat #33404a; }
.tray { margin-left: auto; display: flex; align-items: center; line-height: 17px; text-align: center; padding-right: 16px; }
.cpu { width: 50px; margin-right: 18px; }
.sys { width: 98px; height: 20px; }
.ying { margin: 0 14px 0 -3px; font-size: 13px; }
.so { width: 16px; height: 18px; margin-right: 16px; }
.clock { width: 62px; margin-right: 17px; }
.note { width: 28px; height: 26px; font-size: 12px; fill: #fff; }
```
